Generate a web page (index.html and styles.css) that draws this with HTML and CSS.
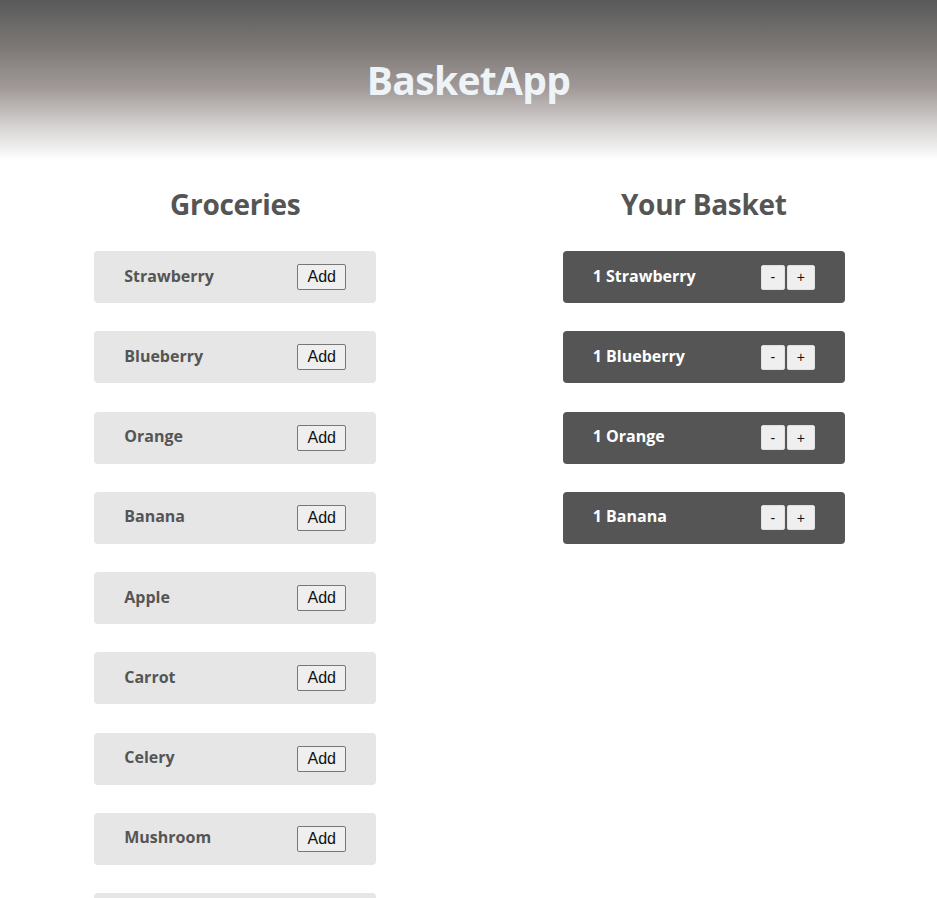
FILE: index.html
```html
<!DOCTYPE html>
<html>
<head>
<meta charset="utf-8">
<link rel="stylesheet" href="styles.css">
</head>
<body>
<header class="hero"><h1 class="title">BasketApp</h1></header>
<main class="columns">
  <section class="column">
    <h2 class="heading">Groceries</h2>
    <ul class="list">
      <li class="card"><span class="name">Strawberry</span><button class="add">Add</button></li>
      <li class="card"><span class="name">Blueberry</span><button class="add">Add</button></li>
      <li class="card"><span class="name">Orange</span><button class="add">Add</button></li>
      <li class="card"><span class="name">Banana</span><button class="add">Add</button></li>
      <li class="card"><span class="name">Apple</span><button class="add">Add</button></li>
      <li class="card"><span class="name">Carrot</span><button class="add">Add</button></li>
      <li class="card"><span class="name">Celery</span><button class="add">Add</button></li>
      <li class="card"><span class="name">Mushroom</span><button class="add">Add</button></li>
      <li class="card"><span class="name">Pepper</span><button class="add">Add</button></li>
    </ul>
  </section>
  <section class="column">
    <h2 class="heading">Your Basket</h2>
    <ul class="list">
      <li class="card dark"><span class="name">1 Strawberry</span><span class="qty"><button class="step">-</button><button class="step">+</button></span></li>
      <li class="card dark"><span class="name">1 Blueberry</span><span class="qty"><button class="step">-</button><button class="step">+</button></span></li>
      <li class="card dark"><span class="name">1 Orange</span><span class="qty"><button class="step">-</button><button class="step">+</button></span></li>
      <li class="card dark"><span class="name">1 Banana</span><span class="qty"><button class="step">-</button><button class="step">+</button></span></li>
    </ul>
  </section>
</main>
</body>
</html>
```
FILE: styles.css
```css
html, body {
  margin: 0;
  padding: 0;
  background: #ffffff;
  font-family: "Open Sans", "Noto Sans", sans-serif;
}
.hero {
  height: 160px;
  background: linear-gradient(to bottom, #595959 0%, #7e7977 30%, #a09998 55%, #d8d5d4 80%, #ffffff 100%);
  display: flex;
  justify-content: center;
  align-items: flex-start;
}
.title {
  margin: 52px 0 0;
  font-size: 39px;
  line-height: 56px;
  font-weight: 700;
  color: #eef3f8;
  letter-spacing: -0.7px;
}
.columns {
  display: flex;
}
.column {
  width: 50%;
  box-sizing: border-box;
  padding-left: 2px;
  display: flex;
  flex-direction: column;
  align-items: center;
}
.heading {
  margin: 24px 0 0;
  font-size: 28px;
  line-height: 40px;
  font-weight: 700;
  color: #555555;
  letter-spacing: -0.3px;
}
.list {
  list-style: none;
  margin: 27px 0 0;
  padding: 0;
  display: flex;
  flex-direction: column;
  gap: 28.25px;
}
.card {
  width: 282px;
  height: 52px;
  box-sizing: border-box;
  padding: 0 30px;
  border-radius: 4px;
  background: #e6e6e6;
  display: flex;
  align-items: center;
  justify-content: space-between;
}
.name {
  font-size: 16px;
  font-weight: 700;
  color: #555555;
  margin-top: -3px;
}
.add {
  width: 49px;
  height: 26px;
  padding: 0;
  font-family: "Liberation Sans", Arial, sans-serif;
  font-size: 16px;
  color: #111;
  background: #efefef;
  border: 1px solid #767676;
  border-radius: 2px;
}
.card.dark {
  background: #555555;
}
.card.dark .name {
  color: #ffffff;
}
.qty {
  display: flex;
  gap: 2px;
}
.step {
  width: 24px;
  height: 25px;
  padding: 0;
  font-family: "Liberation Sans", Arial, sans-serif;
  font-size: 14px;
  color: #111;
  background: #efefef;
  border: 1px solid #e0e0e0;
  border-radius: 2px;
}
.step + .step {
  width: 28px;
}
```
